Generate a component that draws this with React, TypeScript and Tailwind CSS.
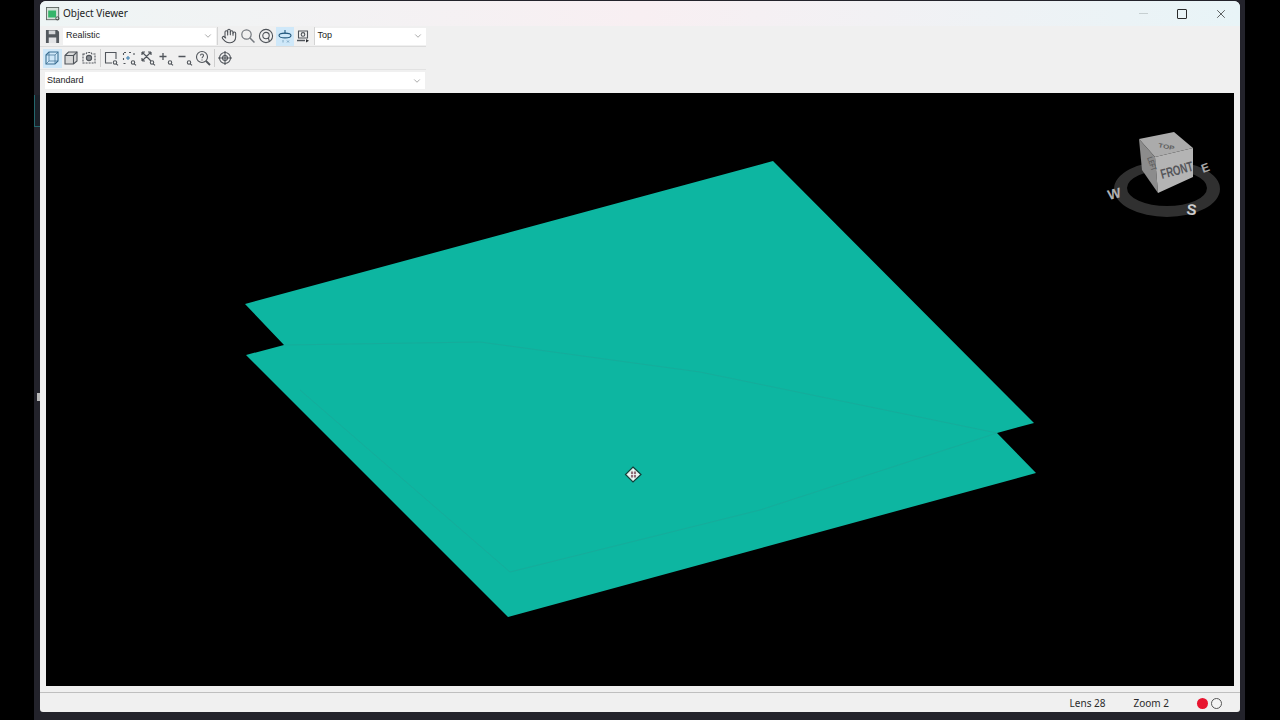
import { ChevronDown, Hand, X } from "lucide-react";
import * as React from "react";

const stroke = "#50555b";

function Icon({ children }: { children: React.ReactNode }) {
  return (
    <svg viewBox="0 0 16 16" className="h-4 w-4" fill="none" stroke={stroke} strokeWidth="1.1">
      {children}
    </svg>
  );
}

function ToolButton({ active, children }: { active?: boolean; children: React.ReactNode }) {
  return (
    <div className={`flex h-[19px] w-[18.5px] shrink-0 items-center justify-center ${active ? "bg-[#cfe8f9]" : ""}`}>
      {children}
    </div>
  );
}

function Separator() {
  return <div className="mx-[1px] h-[18px] w-px shrink-0 bg-[#cfcfcf]" />;
}

function Combo({ label, className }: { label: string; className: string }) {
  return (
    <div className={`flex h-[17px] items-center justify-between bg-white pl-[2px] pr-[3px] text-[9px] text-[#1c1c1c] ${className}`}>
      <span>{label}</span>
      <ChevronDown className="h-[10px] w-[10px] text-[#777]" strokeWidth={1.5} />
    </div>
  );
}

function ZoomGlass() {
  return (
    <>
      <circle cx="12" cy="12.500" r="1.700" />
      <path d="M13.300 13.800 15 15.400" />
    </>
  );
}

function ToolbarOne() {
  return (
    <div className="flex h-[21px] items-center border-b border-[#dcdcdc] pl-[5px]">
      <svg viewBox="0 0 16 16" className="mr-[3px] h-[15px] w-[15px] shrink-0">
        <path d="M1 1h12l2 2v12H1z" fill="#54595e" />
        <path d="M4 1.500h7v4H4z" fill="#d5d7d9" />
        <path d="M4 9h8v6H4z" fill="#e3e4e6" />
      </svg>
      <Combo label="Realistic" className="w-[153px] pl-[3px]" />
      <div className="ml-[1px] mr-[2px] h-[18px] w-px bg-[#d4d4d4]" />
      <ToolButton>
        <Hand className="h-[16px] w-[16px] text-[#4b4f55]" strokeWidth={1.6} />
      </ToolButton>
      <ToolButton>
        <svg viewBox="0 0 16 16" className="h-4 w-4" fill="none" stroke="#74797f" strokeWidth="1.2">
          <circle cx="6.500" cy="6.500" r="4.700" />
          <path d="M10 10l4.500 4.500" strokeWidth="1.500" />
        </svg>
      </ToolButton>
      <ToolButton>
        <Icon>
          <circle cx="8" cy="8" r="6.600" />
          <circle cx="8" cy="7.600" r="3.200" />
          <path d="M10.400 10 11.500 14" />
        </Icon>
      </ToolButton>
      <ToolButton active>
        <Icon>
          <ellipse cx="8" cy="7.500" rx="6" ry="2.400" stroke="#24597f" />
          <path d="M8 2v4" stroke="#24597f" />
          <path d="M6 12v2.500M10 12.500l2 2M12 12.500l-2 2" stroke="#6d9ab8" strokeWidth="0.800" />
        </Icon>
      </ToolButton>
      <ToolButton>
        <Icon>
          <path d="M3.500 3h9v7h-9z" />
          <circle cx="8" cy="6.400" r="1.800" />
          <path d="M2 12.500h8" strokeWidth="1.600" />
          <path d="M11 11l3 1.700-3 1.700z" fill="#2d3034" stroke="none" />
        </Icon>
      </ToolButton>
      <div className="ml-[1px] h-[18px] w-px bg-[#d4d4d4]" />
      <Combo label="Top" className="w-[111px] pl-[3px]" />
    </div>
  );
}

function ToolbarTwo() {
  return (
    <div className="flex h-[23px] items-center border-b border-[#e2e2e2] pl-[3px]">
      <ToolButton active>
        <Icon>
          <path d="M2 5 5 2h9v9l-3 3H2z" stroke="#3b6f93" />
          <path d="M2 5h9v9M11 5l3-3M2 14l3-3V2M5 11h9" stroke="#3b6f93" strokeWidth="0.700" />
        </Icon>
      </ToolButton>
      <ToolButton>
        <Icon>
          <path d="M2 5.500 5.500 2H14v9l-3.500 3H2z" fill="#d8d8d8" />
          <path d="M2 5.500h8.500V14M10.500 5.500 14 2" />
        </Icon>
      </ToolButton>
      <ToolButton>
        <Icon>
          <path d="M2 4h3l1-1.500h4L11 4h3v9H2z" strokeDasharray="2 1" />
          <circle cx="8" cy="8" r="2.600" fill="#8a8e93" />
        </Icon>
      </ToolButton>
      <Separator />
      <ToolButton>
        <Icon>
          <path d="M9 13H2.500V2.500H13V9" />
          <ZoomGlass />
        </Icon>
      </ToolButton>
      <ToolButton>
        <Icon>
          <path d="M2.500 5V2.500H5M8 2.500h3M2.500 8v3M2.500 13.500H5M13 5V2.500" strokeDasharray="2 1" />
          <path d="M7 6v4M5 8h4" stroke="#3b7fb0" />
          <ZoomGlass />
        </Icon>
      </ToolButton>
      <ToolButton>
        <Icon>
          <path d="M2 2l9 9M11 2 2 11M2 2h3M2 2v3M11 2H8M11 2v3M2 11h3M2 11V8" strokeWidth="1.200" />
          <ZoomGlass />
        </Icon>
      </ToolButton>
      <ToolButton>
        <Icon>
          <path d="M5 3v7M1.500 6.500h7" strokeWidth="1.300" />
          <ZoomGlass />
        </Icon>
      </ToolButton>
      <ToolButton>
        <Icon>
          <path d="M1.500 6.500h7" strokeWidth="1.300" />
          <ZoomGlass />
        </Icon>
      </ToolButton>
      <ToolButton>
        <Icon>
          <circle cx="7" cy="7" r="5.500" />
          <path d="M5.500 5.500c0-2 3-2 3 0 0 1.300-1.500 1.300-1.500 2.800M7 9.500v1" />
          <path d="M11 11l4 4" strokeWidth="1.800" />
        </Icon>
      </ToolButton>
      <Separator />
      <ToolButton>
        <Icon>
          <circle cx="8" cy="8" r="5.500" />
          <circle cx="8" cy="8" r="2.500" />
          <path d="M8 1v14M1 8h14" />
        </Icon>
      </ToolButton>
    </div>
  );
}

function Scene() {
  return (
    <svg viewBox="46 93 1188 593" className="block h-[593px] w-[1188px]">
      <rect x="46" y="93" width="1188" height="593" fill="#000" />
      <polygon
        points="245,304 773,161 1034,423 997,433 1036,473 508,617 246,355 284,345"
        fill="#0db6a1"
      />
      <g fill="none" stroke="#1aa999" strokeWidth="1" opacity="0.7">
        <path d="M284 345 480 342 700 372 997 433" />
        <path d="M510 572 760 510 997 433" />
        <path d="M300 390 510 572" />
      </g>
      {/* cursor */}
      <g>
        <path d="M633 467 641 474.500 633 482 625.500 474.500z" fill="#dff0ec" stroke="#123f3a" strokeWidth="1.200" />
        <path d="M631 471.500h5v6h-5z" fill="#8f6d78" />
        <path d="M633.500 469v11M628 474.500h11" stroke="#f5fbfa" strokeWidth="0.800" />
      </g>
      {/* nav cube */}
      <path
        fillRule="evenodd"
        d="M1114 189a53 28 0 1 0 106 0a53 28 0 1 0-106 0zM1127 188a40 18 0 1 1 80 0a40 18 0 1 1-80 0z"
        fill="#303030"
      />
      <polygon points="1139,139 1174,132 1193,148 1155,157" fill="#ababab" />
      <polygon points="1139,139 1155,157 1158,193 1142,170" fill="#8c8c8c" />
      <polygon points="1155,157 1193,148 1193,177 1158,193" fill="#b4b4b4" />
      <g fontFamily="'Liberation Sans', sans-serif" fontWeight="700">
        <text transform="translate(1158,147) rotate(12) scale(1,0.75)" fontSize="8" fill="#5f5f5f">TOP</text>
        <text transform="translate(1147,158) rotate(70) scale(0.7,1)" fontSize="8" fill="#5f5f5f">LEFT</text>
        <text transform="translate(1162,179) rotate(-15) scale(0.8,1.150)" fontSize="12" fill="#55565a">FRONT</text>
        <text transform="translate(1109,200) rotate(-14)" fontSize="14" fill="#b0b0b0">W</text>
        <text transform="translate(1186,214) rotate(8)" fontSize="15" fill="#cfcfcf">S</text>
        <text transform="translate(1203,173) rotate(-20)" fontSize="12" fill="#a8a8a8">E</text>
      </g>
    </svg>
  );
}

export default function App() {
  return (
    <div className="flex h-[720px] w-[1280px] overflow-hidden bg-black font-['Liberation_Sans',sans-serif]">
      <div className="ml-[34px] flex h-full w-[1211px] bg-[#23232b] pr-[5px] pt-px">
        {/* bits of the desktop behind the window */}
        <div className="flex w-[6px] shrink-0 flex-col">
          <div className="mt-[94px] h-[32px] border-b border-l border-[#24666c] bg-[#1b2129]" />
          <div className="ml-[3px] mt-[266px] h-[8px] w-[3px] bg-[#b9b9b9]" />
        </div>
        <div className="flex h-[711px] w-[1200px] flex-col overflow-hidden rounded-t-[6px] rounded-b-[3px] bg-[#f0f0f0]">
          <header className="flex h-[25px] shrink-0 items-center bg-gradient-to-r from-[#eef5f5] via-[#f8eff2] to-[#e8f4f7] pl-[6px]">
            <svg viewBox="0 0 16 16" className="h-[14px] w-[14px]">
              <rect x="0.500" y="0.500" width="14" height="14" fill="#d8e2dc" stroke="#59625e" />
              <rect x="2.500" y="4" width="9" height="8" fill="#35b56a" />
              <circle cx="13" cy="13" r="1.800" fill="none" stroke="#444" />
            </svg>
            <span className="ml-[3px] font-['Noto_Sans',sans-serif] text-[10px] text-[#1d1d1d]">Object Viewer</span>
            <div className="ml-auto flex items-center">
              <div className="h-px w-[9px] bg-[#c6cfd1]" />
              <div className="ml-[29px] h-[10px] w-[10px] rounded-[1px] border border-[#2b2b2b]" />
              <X className="ml-[27px] mr-[12px] h-[14px] w-[14px] text-[#222]" strokeWidth={1.2} />
            </div>
          </header>
          <div className="w-[386px] shrink-0">
            <ToolbarOne />
            <ToolbarTwo />
            <div className="flex h-[23px] items-center pb-[2px] pl-[5px]">
              <Combo label="Standard" className="h-[16px] w-[380px]" />
            </div>
          </div>
          <div className="shrink-0 px-[6px]">
            <Scene />
          </div>
          <footer className="mt-[6px] flex flex-1 items-center justify-end border-t border-[#bfbfbf] pt-[2px] font-['Noto_Sans',sans-serif] text-[10px] text-[#2a2a2a]">
            <span>Lens 28</span>
            <span className="ml-[28px]">Zoom 2</span>
            <span className="ml-[28px] h-[11px] w-[11px] rounded-full bg-[#e8142f]" />
            <span className="ml-[3px] mr-[18px] h-[11px] w-[11px] rounded-full border border-[#555] bg-[#f4f4f4]" />
          </footer>
        </div>
      </div>
    </div>
  );
}
